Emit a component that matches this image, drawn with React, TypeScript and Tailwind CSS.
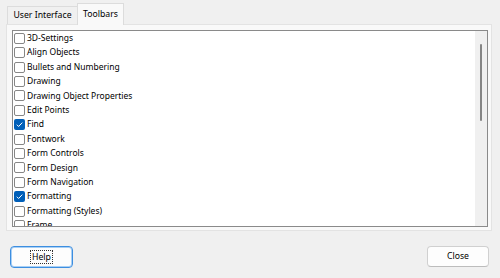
import React from "react";

const items: [string, boolean][] = [
  ["3D-Settings", false],
  ["Align Objects", false],
  ["Bullets and Numbering", false],
  ["Drawing", false],
  ["Drawing Object Properties", false],
  ["Edit Points", false],
  ["Find", true],
  ["Fontwork", false],
  ["Form Controls", false],
  ["Form Design", false],
  ["Form Navigation", false],
  ["Formatting", true],
  ["Formatting (Styles)", false],
  ["Frame", false],
];

function Check({ checked }: { checked: boolean }) {
  if (checked) {
    return (
      <div className="w-[11px] h-[11px] rounded-[2px] bg-[#005fb8] flex items-center justify-center shrink-0">
        <svg width="9" height="9" viewBox="0 0 9 9">
          <path d="M1.8 4.7 L3.6 6.5 L7.3 2.6" fill="none" stroke="white" strokeWidth="1" />
        </svg>
      </div>
    );
  }
  return <div className="w-[11px] h-[11px] rounded-[2px] border border-[#868686] bg-white shrink-0" />;
}

export default function App() {
  return (
    <div
      className="w-[500px] h-[278px] bg-[#f0f0f0] relative overflow-hidden text-black"
      style={{ fontFamily: '"Noto Sans", Lato, sans-serif' }}
    >
      {/* tabs */}
      <div className="flex pl-[7px] pt-[3px] h-[24px] items-end">
        <div className="h-[18px] w-[71px] flex items-center justify-center border border-b-0 border-[#dcdcdc] bg-[#f0f0f0] text-[8.7px] leading-none">
          User Interface
        </div>
        <div className="h-[22px] w-[47px] -ml-px flex items-center justify-center border border-b-0 border-[#dcdcdc] bg-[#f9f9f9] text-[8.7px] leading-none relative z-10 mb-[-1px]">
          Toolbars
        </div>
      </div>
      {/* panel */}
      <div className="ml-[6px] w-[486px] h-[207px] bg-[#f9f9f9] border border-[#e3e3e3] pt-[5px] pl-[5px]">
        <div className="w-[476px] h-[197px] bg-white border border-[#8a8a8a] flex overflow-hidden">
          <div className="flex-1 flex flex-col">
            {items.map(([label, checked]) => (
              <div key={label} className="h-[14.42px] shrink-0 flex items-center pl-[1px] gap-[2px]">
                <Check checked={checked} />
                <span className="text-[8.5px] leading-none whitespace-nowrap">{label}</span>
              </div>
            ))}
          </div>
          <div className="w-[12px] bg-[#f0f0f0] flex justify-center pt-[13px]">
            <div className="w-[2px] h-[77px] bg-[#858585] rounded-full" />
          </div>
        </div>
      </div>
      {/* buttons */}
      <div className="flex justify-between pl-[10px] pr-[11px] mt-[15px]">
        <div className="w-[63px] h-[22px] rounded-[4px] border border-[#3d8ee0] bg-[#fdfdfd] flex items-center justify-center shadow-[inset_0_0_0_1px_#a9d0f5]">
          <span className="text-[8.7px] leading-none px-px py-[2px] outline outline-1 outline-dotted outline-[#333]">Help</span>
        </div>
        <div className="w-[62px] h-[21px] rounded-[4px] border border-[#d0d0d0] border-b-[#bcbcbc] bg-[#fdfdfd] flex items-center justify-center text-[8.7px] leading-none">
          Close
        </div>
      </div>
    </div>
  );
}
